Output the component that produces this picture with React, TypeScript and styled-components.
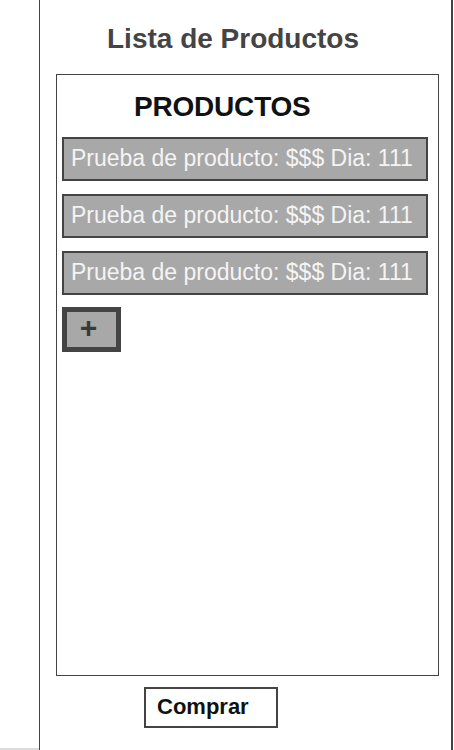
import styled, { createGlobalStyle } from "styled-components";

const Global = createGlobalStyle`
  html, body {
    margin: 0;
    padding: 0;
    background: #fff;
    font-family: "Liberation Sans", Arial, sans-serif;
  }
`;

const Page = styled.div`
  display: flex;
  height: 750px;
  overflow: hidden;
`;

const Side = styled.div`
  width: 39px;
  height: 750px;
  box-sizing: border-box;
  border-bottom: 2px solid #dcdcdc;
`;

const Frame = styled.div`
  width: 414px;
  height: 750px;
  box-sizing: border-box;
  border-left: 1px solid #444;
  border-right: 2px solid #444;
  display: flex;
  flex-direction: column;
`;

const Title = styled.h1`
  margin: 23px 0 0 67px;
  font-size: 28px;
  line-height: 32px;
  font-weight: bold;
  color: #444;
`;

const Panel = styled.div`
  margin: 19px 0 0 16px;
  width: 383px;
  height: 602px;
  box-sizing: border-box;
  border: 1px solid #444;
  padding: 16px 0 0 5px;
  display: flex;
  flex-direction: column;
  gap: 13px;
`;

const Heading = styled.h2`
  margin: 0 0 1px 72px;
  font-size: 28px;
  line-height: 32px;
  font-weight: bold;
  letter-spacing: -0.2px;
  color: #111;
`;

const Item = styled.div`
  width: 366px;
  height: 44px;
  box-sizing: border-box;
  border: 2px solid #444;
  background: #a8a8a8;
  color: #f4f4f4;
  font-size: 23px;
  padding: 0 0 2px 7px;
  display: flex;
  align-items: center;
  white-space: nowrap;
`;

const AddButton = styled.button`
  margin-top: -1px;
  width: 59px;
  height: 45px;
  box-sizing: border-box;
  border: 5px solid #444;
  background: #a8a8a8;
  color: #3a3a3a;
  font-family: inherit;
  font-size: 30px;
  font-weight: bold;
  line-height: 1;
  padding: 0 6px 3px 0;
  display: flex;
  align-items: center;
  justify-content: center;
`;

const Buy = styled.button`
  margin: 11px 0 0 104px;
  width: 134px;
  height: 41px;
  box-sizing: border-box;
  border: 2px solid #444;
  background: #fff;
  color: #111;
  font-family: inherit;
  font-size: 22px;
  font-weight: bold;
  text-align: left;
  padding: 0 0 1px 11px;
`;

const products = [
  "Prueba de producto: $$$ Dia: 111",
  "Prueba de producto: $$$ Dia: 111",
  "Prueba de producto: $$$ Dia: 111",
];

export default function App() {
  return (
    <>
      <Global />
      <Page>
        <Side />
        <Frame>
          <Title>Lista de Productos</Title>
          <Panel>
            <Heading>PRODUCTOS</Heading>
            {products.map((p, i) => (
              <Item key={i}>{p}</Item>
            ))}
            <AddButton>+</AddButton>
          </Panel>
          <Buy>Comprar</Buy>
        </Frame>
      </Page>
    </>
  );
}
